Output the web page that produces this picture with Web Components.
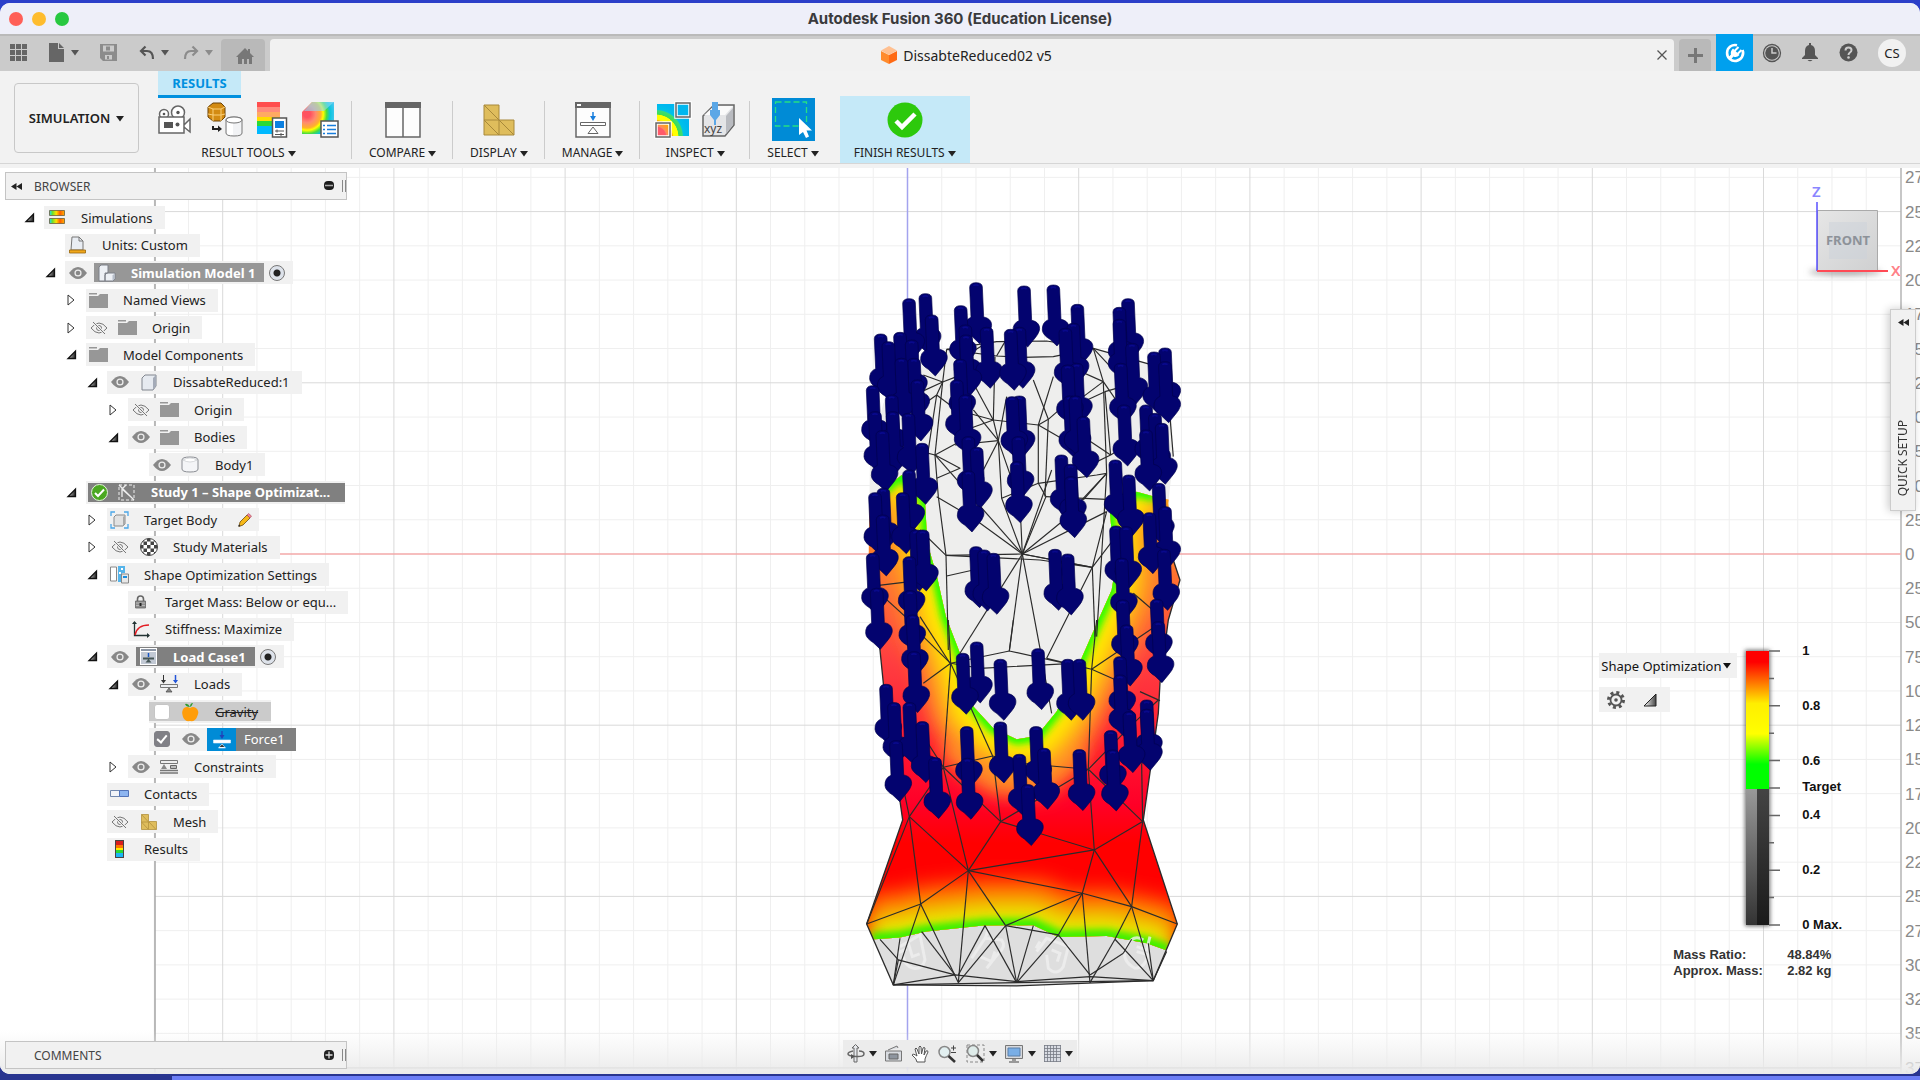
<!DOCTYPE html>
<html lang="en">
<head>
<meta charset="utf-8">
<title>Autodesk Fusion 360 (Education License)</title>
<style>
  html, body { height: 100%; }
  body {
    margin: 0;
    overflow: hidden;
    background: #2c3fc9;
    color: #222;
    font-family: "Noto Sans", "Open Sans", sans-serif;
    font-size: 13px;
  }
</style>
</head>
<body>
<fusion-app></fusion-app>

<script>
// icons.js
const ICONS = {
  grid: [18, 17, '<g fill="#666"><path d="M0 0h5v5H0zM6 0h5v5H6zM12 0h5v5h-5zM0 6h5v5H0zM6 6h5v5H6zM12 6h5v5h-5zM0 12h5v5H0zM6 12h5v5H6zM12 12h5v5h-5z"/></g>'],
  file: [16, 19, '<path fill="#666" d="M0 0h9v6h6v13H0zM10 0l5 5h-5z"/>'],
  save: [18, 17, '<path fill="#8c8c8c" fill-rule="evenodd" d="M0 0h17v17H3l-3-3zM3 1.500v6h11v-6zM5 11v4.500h7V11z"/><path fill="#8c8c8c" d="M6 2.500h4v4H6zM7 12h2v3H7z"/>'],
  undo: [16, 15, '<path d="M2 6h6q6 0 6 8M6.500 1.500L2 6l4.500 4.500" fill="none" stroke="#555" stroke-width="2.200"/>'],
  redo: [16, 15, '<path d="M14 6H8q-6 0-6 8M9.500 1.500L14 6l-4.500 4.500" fill="none" stroke="#8c8c8c" stroke-width="2.200"/>'],
  home: [18, 16, '<path fill="#777" d="M9 0l3 3V1h2v4l4 4h-2v7h-3v-5h-2v5H8v-5H6v5H2V9H0z"/>'],
  cube: [18, 18, '<path fill="#ff8b2d" d="M1 5l8 4v9l-8-4z"/><path fill="#ff6a13" d="M9 9l8-4v9l-8 4z"/><path fill="#ffc091" d="M9 0l8 4.500L9 9 1 4.500z"/>'],
  close: [12, 12, '<path d="M1.500 1.500l9 9m0-9l-9 9" stroke="#555" stroke-width="1.300"/>'],
  plus: [15, 15, '<path d="M7.500 0v15M0 7.500h15" stroke="#777" stroke-width="3"/>'],
  plug: [20, 20, '<path d="M12 2.200A8 8 0 1 0 17.500 7" fill="none" stroke="#fff" stroke-width="2.600"/><path fill="#fff" d="M8 5.500l6.500 6.500q-3 3-6 1.500L5.500 17 3 14.500l3-3q-1-3 2-6z"/><path d="M9.500 8l4-4M12.500 11l4-4" stroke="#fff" stroke-width="2"/>'],
  clock: [20, 20, '<circle cx="10" cy="10" r="8.500" fill="none" stroke="#555" stroke-width="1.300"/><circle cx="10" cy="10" r="6.800" fill="#555"/><path d="M10 5v5h4.500" fill="none" stroke="#ccc" stroke-width="1.500"/>'],
  bell: [16, 19, '<path fill="#555" d="M7 0h2v2q4 1 4 6v4l3 3v1H0v-1l3-3V8q0-5 4-6zM5.500 17h5q-2.500 2.500-5 0z"/>'],
  help: [19, 19, '<circle cx="9.500" cy="9.500" r="9" fill="#555"/><path d="M6.500 7.500q0-3 3-3t3 2.500q0 1.500-1.500 2.500T9.500 12" fill="none" stroke="#ccc" stroke-width="2"/><circle cx="9.500" cy="14.500" r="1.300" fill="#ccc"/>'],
  caret: [8, 7, '<path fill="currentColor" d="M0 1h8L4 6.500z"/>'],
  rewind: [11, 7, '<path fill="#222" d="M5.500 0v7L0 3.500zM11 0v7L5.500 3.500z"/>'],
  minus: [10, 10, '<rect width="10" height="9" rx="4" fill="#1c1c1c"/><path d="M1 4.500h8" stroke="#aaa" stroke-width="1.300"/>'],
  plusdot: [10, 10, '<rect width="10" height="10" rx="4" fill="#222"/><path d="M1.500 5h7M5 1.500v7" stroke="#ddd" stroke-width="1.300"/>'],
  camera: [34, 30, '<g fill="#fff" stroke="#666" stroke-width="1.500"><circle cx="6" cy="9" r="4.500"/><circle cx="20" cy="7.500" r="6.500"/><path d="M1 12h25v16H1zM26 20l6-6v13l-6-5z"/></g><g fill="#555"><circle cx="6" cy="9" r="1.300"/><circle cx="20" cy="7.500" r="1.700"/><path d="M6 17h9v6H6z"/><circle cx="19.500" cy="19.500" r="2"/></g>'],
  convert: [37, 35, '<path fill="#d38b12" stroke="#6b4207" d="M2 5l5-4h8l4 4v10l-4 4H7l-5-4z"/><path d="M2 5l5 2h8l4-2M7 7v12M15 7v12M7 13h8M2 12l5 1M19 12l-4 1" stroke="#fbd079" fill="none"/><path d="M7 24v3h6" stroke="#222" stroke-width="2" fill="none"/><path fill="#222" d="M12 23.500l4 3.500-4 3z"/><path fill="#f2f3f5" stroke="#777" d="M20 18v13q0 3 8 3t8-3V18q0-3-8-3t-8 3z"/><path fill="#fff" d="M21 20h6v13q-6 0-6-2z"/><ellipse cx="28" cy="18" rx="8" ry="3" fill="#fff" stroke="#777"/>'],
  legendtool: [31, 37, '<path fill="#ff4e4e" d="M0 1h23v6H0z"/><path fill="#ff8b7c" d="M0 6h23v6H0z"/><path fill="#ffaa63" d="M0 11h23v6H0z"/><path fill="#fd0" d="M0 16h23v5H0z"/><path fill="#2bd935" d="M0 20h23v5H0z"/><path fill="#00b9ff" d="M0 25h23v8H0z"/><path fill="#fff" stroke="#555" stroke-width="1.500" d="M15.500 17h14v19h-14z"/><path fill="#0c80e0" d="M18 20h9v7h-9z"/><path d="M18 30h9m-9 3.500h9M20 28.500v3m4 .500v3" stroke="#555"/>'],
  probe: [37, 37, '<defs><radialGradient id="r" cx="5" cy="13" r="29" gradientUnits="userSpaceOnUse"><stop offset=".12" stop-color="#ff5260"/><stop offset=".3" stop-color="#ff8a70"/><stop offset=".48" stop-color="#ffb12b"/><stop offset=".56" stop-color="#ff0"/><stop offset=".68" stop-color="#49dd3e"/><stop offset=".8" stop-color="#09c5de"/><stop offset="1" stop-color="#52c8f1"/></radialGradient></defs><path fill="url(#r)" d="M10 1h22v32H0V11z"/><path fill="#8fdaf3" opacity=".6" d="M10 1h22L22 10H2z"/><path fill="#fff" stroke="#555" stroke-width="1.500" d="M19 20h17v16H19z"/><path d="M25 24.500h9M25 28.500h9M25 32.500h9" stroke="#177ddc" stroke-width="1.500"/><path d="M21 24.500h2M21 28.500h2M21 32.500h2" stroke="#177ddc" stroke-width="1.500"/>'],
  compare: [36, 36, '<path fill="#fdfdfd" stroke="#666" stroke-width="1.500" d="M1 1h34v34H1z"/><path fill="#666" d="M0 0h36v6H0z"/><path d="M18 6v29" stroke="#666" stroke-width="1.500"/>'],
  mesh: [32, 32, '<path fill="#dfbd5c" stroke="#a8893a" d="M1 1h15v15h15v15H1zM1 16h15v15M1 1l15 15M1 16l15 15M16 16l15 15"/>'],
  manage: [36, 36, '<path fill="#fdfdfd" stroke="#666" stroke-width="1.500" d="M1 1h34v34H1z"/><path fill="#666" d="M0 0h36v6H0z"/><path fill="#fff" d="M2 2h4v2H2z"/><path d="M18 10v6" stroke="#177ddc" stroke-width="1.500"/><path fill="#177ddc" d="M15 14h6l-3 5z"/><path fill="#fff" stroke="#666" d="M5.500 20.500h25v3h-25zM18 25l5 6.500H13z"/>'],
  inspect: [38, 38, '<defs><radialGradient id="r" cx="2" cy="36" r="33" gradientUnits="userSpaceOnUse"><stop offset=".3" stop-color="#ff596a"/><stop offset=".33" stop-color="#ff8b5e"/><stop offset=".5" stop-color="#fa0"/><stop offset=".52" stop-color="#ff0"/><stop offset=".67" stop-color="#ff0"/><stop offset=".69" stop-color="#3ddc55"/><stop offset=".8" stop-color="#3ddc75"/><stop offset=".83" stop-color="#00c3e6"/><stop offset="1" stop-color="#00b7ef"/></radialGradient></defs><path fill="url(#r)" d="M3 3h32v32H3z"/><g fill="none" stroke="#fff" stroke-width="3.500"><path d="M22 2h14v14H22zM2 22h14v14H2z"/></g><g fill="none" stroke="#666" stroke-width="1.500"><path d="M22 2h14v14H22zM2 22h14v14H2z"/></g>'],
  xyz: [34, 36, '<path fill="#e4e5e7" stroke="#666" stroke-width="1.500" d="M1 14L12 3h20v20L23 34H1z"/><path fill="#fff" opacity=".8" d="M2 13L12 4h19l-8 9z"/><path fill="#b9bbc0" d="M24 14l7-8v17l-7 9z"/><path fill="#5ba7e6" d="M10 0h6v8h2v5l-4 5v5h-2v-5l-4-5V8h2z"/><text x="2" y="31" font-size="12" font-family="Noto Sans, sans-serif" fill="#444">xyz</text>'],
  select: [43, 43, '<path fill="#008bd6" d="M0 0h43v43H0z"/><path d="M3.500 4h31v24h-31z" fill="none" stroke="#25e083" stroke-width="1.300" stroke-dasharray="6 3"/><path fill="#fff" d="M27 20v17l4-3 3 6 3-1.500-2.500-6H40z"/>'],
  finish: [36, 36, '<circle cx="18" cy="18" r="17.500" fill="#2dc90c"/><path d="M9 19l6 6 13-13" fill="none" stroke="#fff" stroke-width="4.500"/>'],
  open: [9, 9, '<defs><linearGradient id="o"><stop offset="0" stop-color="#ccc"/><stop offset="1" stop-color="#222"/></linearGradient></defs><path fill="url(#o)" stroke="#111" stroke-width="1.300" d="M8.500 1v7.500H1z"/>'],
  closed: [8, 12, '<path fill="#fff" stroke="#333" d="M1 1v10l6-5z"/>'],
  eye: [18, 12, '<path fill="#888" d="M0 6q9-12 18 0-9 12-18 0z"/><circle cx="9" cy="6" r="3.600" fill="#eee"/><circle cx="9" cy="6" r="2.300" fill="#888"/>'],
  eyeoff: [18, 14, '<path fill="none" stroke="#777" d="M1 7q8-10 16 0-8 10-16 0z"/><circle cx="9" cy="7" r="2.500" fill="none" stroke="#777"/><path d="M3 1l12 12" stroke="#eee" stroke-width="2.500"/><path d="M3 1l12 12" stroke="#777"/>'],
  folder: [19, 15, '<path fill="#979797" d="M0 3h9l2-2h8v14H0zM0 0h8v1.500H0z"/>'],
  sims: [16, 15, '<defs><linearGradient id="s"><stop offset="0" stop-color="#19d7ff"/><stop offset=".2" stop-color="#6be02c"/><stop offset=".45" stop-color="#ffe100"/><stop offset=".7" stop-color="#ff5a00"/><stop offset="1" stop-color="#ffb400"/></linearGradient></defs><path fill="url(#s)" stroke="#6b5d3a" stroke-width=".8" d="M.500.500h15v5H.500zM.500 8.500h15v5H.500z"/>'],
  units: [17, 18, '<path fill="#e9edf3" stroke="#777" d="M3 1h7l4 4v9H2z"/><path d="M10 1v4h4" fill="none" stroke="#777"/><path fill="#f0a71b" stroke="#99660a" stroke-width=".8" d="M.500 14h16v3H.500z"/>'],
  component: [18, 18, '<path fill="#edf0f5" stroke="#7c8089" d="M1 3l2-2h7v8H7v8H1zM7 11l2-2h8v6l-2 2H7z"/><path fill="#b6bdca" d="M14.500 11.500l2-2v5.500l-2 2z"/>'],
  body: [16, 17, '<path fill="#e6eaf0" stroke="#80858e" d="M1 4l3-3h11v11l-3 4H1z"/><path fill="#a4abb8" d="M12 4l3-3v11l-3 4z"/>'],
  solid: [19, 17, '<path fill="#f4f5f7" stroke="#8a8d93" d="M1 4q0-3 8-3t8 3v9q0 3-8 3t-8-3z"/><path fill="#fff" stroke="#c5c8cc" stroke-width=".7" d="M2 4q7-4 14 0-7 4-14 0z"/>'],
  ok: [17, 17, '<circle cx="8.500" cy="8.500" r="8" fill="#4ba821" stroke="#e2f3da"/><path d="M4 9l3 3 6-6.500" fill="none" stroke="#fff" stroke-width="2"/>'],
  study: [17, 17, '<path d="M1 1h15v15H1z" fill="none" stroke="#eee" stroke-dasharray="3 2"/><path d="M1 1l15 15M4 13V5l9 8M4 5l4-4" fill="none" stroke="#eee" stroke-width="1.300"/>'],
  target: [19, 18, '<path d="M1 5V1h4M14 1h4v4M18 13v4h-4M5 17H1v-4" fill="none" stroke="#4ba7e8" stroke-width="1.300"/><path fill="#e2e2e2" stroke="#8a8a8a" d="M4 6l2-2h9v9l-2 2H4z"/><path fill="#aaa" d="M13 6l2-2v9l-2 2z"/>'],
  pencil: [14, 14, '<path fill="#f6b817" stroke="#6d4b10" stroke-width=".8" d="M3 9l7-7 3 3-7 7-4 1.500z"/><path fill="#e89" stroke="#a45" stroke-width=".6" d="M10 2l1.500-1.500 3 2.500L13 5z"/><path fill="#222" d="M1 13.500l1-2 1.500 1.500z"/>'],
  ball: [18, 18, '<defs><pattern id="b" width="7" height="7" patternUnits="userSpaceOnUse"><path fill="#444" d="M0 0h3.500v3.500H0zM3.500 3.500H7V7H3.500z"/></pattern></defs><circle cx="9" cy="9" r="8.500" fill="#fff"/><circle cx="9" cy="9" r="8.500" fill="url(#b)" stroke="#444"/>'],
  settings: [19, 18, '<path fill="#fff" stroke="#888" d="M.500 1h6v14h-6z"/><path fill="#55b4ea" d="M8 0h7v7h-3v9H8z"/><path fill="#fff" d="M9 6h2v2H9zM11 2h2v2h-2z"/><path fill="#e8e8e8" stroke="#888" d="M11.500 8h7v9h-7z"/><path fill="#1b8ee0" d="M13 10h4v2h-4z"/>'],
  lock: [11, 14, '<path d="M2.500 6V4q0-3 3-3t3 3v2" fill="none" stroke="#666" stroke-width="1.600"/><path fill="#8d8d8d" stroke="#666" stroke-width=".8" d="M.500 6h10v7H.500z"/><path d="M1 8h9M1 10.500h9" stroke="#ccc" stroke-width=".7"/><path fill="#222" d="M4.500 8h2v3h-2z"/>'],
  curve: [18, 17, '<path d="M2.500 1v13.500H17" fill="none" stroke="#233" stroke-width="1.300"/><path d="M3 14q2-10 14-10" fill="none" stroke="#e31c23" stroke-width="1.400"/><path fill="#233" d="M0 3l2.500-3L5 3zM15 12l3 2.500-3 2.500z"/>'],
  loadcase: [17, 17, '<path fill="#fff" d="M0 0h17v17H0z"/><path fill="#c2c9d4" d="M1 4h15v12H1z"/><path fill="#8b95a5" d="M1 1h15v2H1z"/><path d="M8.500 5v4" stroke="#1756c4" stroke-width="1.500"/><path fill="#455" d="M3 9.500h11v2H3zM8.500 11l3 3.500h-6z"/>'],
  loads: [19, 18, '<path d="M3.500 0v7M15.500 0v7" stroke="#333"/><path fill="#333" d="M1 5h5L3.500 8.500z"/><path d="M15.500 0v7" stroke="#2456d8" stroke-width="1.500"/><path fill="#2456d8" d="M13 5h5l-2.500 3.500z"/><path fill="#eef0f3" stroke="#777" d="M.500 9.500h17v3H.500z"/><path fill="#888" stroke="#444" stroke-width=".7" d="M9 13l3 4H6z"/>'],
  apple: [17, 18, '<path fill="#ff9d0a" d="M8 5q3-2 6 0 4 3 1 9-2 5-7 4-5 1-7-4-2-6 1-9 3-2 6 0z"/><path fill="#2e9a2e" d="M8 4q-2-4-5-3 1 3 5 3zM8 4q0-4 3-4-1 3-3 4z"/>'],
  force: [18, 17, '<path d="M9 0v5" stroke="#2141b8" stroke-width="1.300"/><path fill="#2141b8" d="M6.500 4h5L9 8z"/><path fill="#fff" stroke="#dfefff" stroke-width=".6" d="M.500 9h17v3H.500zM9 13l3.500 4h-7z"/><path fill="#333" d="M9 13.500l2.500 2.500h-5z"/>'],
  constraints: [19, 14, '<path fill="#eee" stroke="#777" d="M.500.500h17v3H.500z"/><path d="M0 10.500h18M0 13h18" stroke="#777" stroke-width="1.500"/><path fill="#888" d="M4 4l3 5H1z"/><path fill="#bbb" stroke="#666" d="M10.500 5.500h6v3h-6z"/>'],
  contacts: [19, 8, '<path fill="#f2f4f8" stroke="#7288ad" d="M.500.500h9v6h-9z"/><path fill="#8db5f0" stroke="#5273b8" d="M9.500.500h9v6h-9z"/>'],
  meshsmall: [16, 16, '<path fill="#dfbd5c" stroke="#b3923e" stroke-width=".8" d="M.500.500h7v7h8v8H.500zM.500 8h7v7M.500.500l7 7.500M.500 8l7 7.500M8 8l7 7.500"/>'],
  results: [9, 18, '<path fill="#d81e1e" d="M0 0h9v18H0z"/><path fill="#f70" d="M1 5h7v3H1z"/><path fill="#fe0" d="M1 8h7v2H1z"/><path fill="#2bd935" d="M1 10h7v3H1z"/><path fill="#1ab6f5" d="M1 13h7v4H1z"/><path fill="none" stroke="#444" d="M.500.500h8v17h-8z"/>'],
  gear: [18, 18, '<circle cx="9" cy="9" r="7.500" fill="none" stroke="#555" stroke-width="3" stroke-dasharray="3 2.900"/><circle cx="9" cy="9" r="5.500" fill="#f1f1f1" stroke="#555" stroke-width="1.800"/><circle cx="9" cy="9" r="1.800" fill="#555"/>'],
  ramp: [14, 14, '<defs><linearGradient id="o"><stop offset="0" stop-color="#fff"/><stop offset="1" stop-color="#444"/></linearGradient></defs><path fill="url(#o)" stroke="#222" d="M13 1v12H1z"/>'],
  orbit: [18, 19, '<path fill="#e6e8ec" stroke="#666" d="M7 4h-2L8.500.500 12 4h-2v14H7z"/><path d="M6 7q-5 1-5 3t8 2.500T17 10t-5-3" fill="none" stroke="#666" stroke-width="1.500"/><path fill="#555" d="M4 10l4 2.500L4 15z"/>'],
  look: [18, 17, '<path fill="#d8dbe0" stroke="#777" d="M.500 6h16v10H.500zM3 5l9-4 1 2"/><path fill="#8e959f" stroke="#666" d="M4 9h9v5H4z"/>'],
  hand: [19, 18, '<path fill="#fff" stroke="#555" d="M6 17q0-3-5-7 1-2 5 1L4 4q1-2 2 0l2 5V2q1-2 2 0l.500 7L12 3q1-1 2 0l-1 7 2-4q2-1 2 1-2 4-3 7v3z"/>'],
  zoom: [19, 18, '<circle cx="6.500" cy="7" r="5.500" fill="#e2eff0" stroke="#888" stroke-width="1.500"/><path d="M10.500 11l6.500 6" stroke="#333" stroke-width="2.500"/><path d="M13 3h5m-2.500-2.500v5M13 7.500h5" stroke="#444"/>'],
  zoomwin: [19, 19, '<path d="M1 1h17v17H1z" fill="none" stroke="#888" stroke-dasharray="3 2"/><circle cx="7" cy="7" r="5.500" fill="#dfecea" stroke="#888" stroke-width="1.500"/><path d="M11 11l6 6" stroke="#333" stroke-width="2.500"/>'],
  display: [19, 18, '<path fill="#d6d8dc" stroke="#777" d="M.500.500h17v13H.500z"/><path fill="#79aee6" stroke="#5b7fa8" d="M3 3h12v8H3z"/><path fill="#999" d="M7 14h4v2h3v2H4v-2h3z"/>'],
  gridview: [17, 17, '<path fill="#d9dce3" d="M0 0h17v17H0z"/><path d="M.500 0v17M3.500 0v17M6.500 0v17M9.500 0v17M12.500 0v17M16.500 0v17M0 .500h17M0 3.500h17M0 6.500h17M0 9.500h17M0 12.500h17M0 16.500h17" stroke="#777b85" stroke-width=".8"/>'],
};

class FusionIcon extends HTMLElement {
  constructor() {
    super();
    this.attachShadow({ mode: 'open' });
  }

  connectedCallback() {
    const [w, h, body] = ICONS[this.getAttribute('name')];
    this.shadowRoot.innerHTML = `
      <style>
        :host { display: inline-flex; flex: none; }
        svg { display: block; overflow: visible; }
      </style>
      <svg width="${w}" height="${h}" viewBox="0 0 ${w} ${h}" aria-hidden="true">${body}</svg>
    `;
  }
}
customElements.define('fusion-icon', FusionIcon);

const icon = (name) => `<fusion-icon name="${name}"></fusion-icon>`;

const BUTTON_RESET = `
  button {
    display: inline-flex;
    align-items: center;
    justify-content: center;
    margin: 0;
    padding: 0;
    border: 0;
    background: none;
    font: inherit;
    color: inherit;
  }
`;

// title-bar.js
class TitleBar extends HTMLElement {
  constructor() {
    super();
    this.attachShadow({ mode: 'open' });
    this.shadowRoot.innerHTML = `
      <style>
        ${BUTTON_RESET}
        :host {
          display: grid;
          grid-template-columns: 1fr auto 1fr;
          align-items: center;
          height: 31px;
          background: #eeeff9;
        }
        .lights { display: flex; gap: 9px; padding-left: 9px; }
        .lights button { width: 14px; height: 14px; border-radius: 50%; }
        .red { background: #ff5f57; }
        .yellow { background: #febc2e; }
        .green { background: #28c840; }
        h1 { margin: 0; font: 700 15px Inter, sans-serif; color: #3a3a3c; }
      </style>
      <div class="lights">
        <button class="red" aria-label="Close"></button>
        <button class="yellow" aria-label="Minimize"></button>
        <button class="green" aria-label="Zoom"></button>
      </div>
      <h1><slot></slot></h1>
    `;
  }
}
customElements.define('title-bar', TitleBar);

// document-bar.js
class DocumentBar extends HTMLElement {
  constructor() {
    super();
    this.attachShadow({ mode: 'open' });
    this.shadowRoot.innerHTML = `
      <style>
        ${BUTTON_RESET}
        :host {
          display: flex;
          align-items: stretch;
          height: 37px;
          padding-right: 2px;
          box-sizing: border-box;
          background: #cbcbcb;
          box-shadow: inset 0 2px #bababa;
        }
        .quick { display: flex; align-items: center; width: 221px; color: #555; }
        .quick button { height: 30px; gap: 6px; }
        .apps { margin-left: 10px; }
        .file, .save, .undo { margin-left: 21px; }
        .redo { margin-left: 14px; }
        .dim { color: #8c8c8c; }
        .home, .add { margin-top: 5px; background: #b9b9b9; border-radius: 4px 4px 0 0; }
        .home { width: 44px; padding: 2px 0 0 4px; }
        .tab {
          display: flex;
          flex: 1;
          align-items: center;
          margin: 5px 5px 0;
          padding-left: 12px;
          background: #f1f1f1;
          border-radius: 4px 4px 0 0;
        }
        .name { display: flex; flex: 1; align-items: center; justify-content: center; gap: 5px; font-size: 14px; }
        .close { width: 24px; }
        .add { width: 32px; }
        .ext { width: 37px; margin-left: 5px; background: #00a0ee; }
        .tool { width: 38px; }
        .avatar {
          align-self: center;
          width: 28px;
          height: 28px;
          margin: 0 12px 0 11px;
          border-radius: 50%;
          background: #f1f1f1;
        }
      </style>
      <div class="quick">
        <button class="apps" aria-label="Data panel">${icon('grid')}</button>
        <button class="file" aria-label="File">${icon('file')}${icon('caret')}</button>
        <button class="save dim" aria-label="Save">${icon('save')}</button>
        <button class="undo" aria-label="Undo">${icon('undo')}${icon('caret')}</button>
        <button class="redo dim" aria-label="Redo">${icon('redo')}${icon('caret')}</button>
      </div>
      <button class="home" aria-label="Home">${icon('home')}</button>
      <div class="tab">
        <div class="name">${icon('cube')}<slot></slot></div>
        <button class="close" aria-label="Close document">${icon('close')}</button>
      </div>
      <button class="add" aria-label="New document">${icon('plus')}</button>
      <button class="ext" aria-label="Extensions">${icon('plug')}</button>
      <button class="tool" aria-label="Job status">${icon('clock')}</button>
      <button class="tool" aria-label="Notifications">${icon('bell')}</button>
      <button class="tool" aria-label="Help">${icon('help')}</button>
      <button class="avatar">CS</button>
    `;
  }
}
customElements.define('document-bar', DocumentBar);

// tool-group.js
class ToolGroup extends HTMLElement {
  constructor() {
    super();
    this.attachShadow({ mode: 'open' });
  }

  connectedCallback() {
    const names = this.getAttribute('icons').split(' ');
    const label = this.getAttribute('label');
    this.shadowRoot.innerHTML = `
      <style>
        ${BUTTON_RESET}
        :host {
          display: flex;
          flex-direction: column;
          align-items: center;
          box-sizing: border-box;
          height: 67px;
          padding: 0 17px;
        }
        :host(:not([last])) { background: linear-gradient(#ccc, #ccc) right 5px / 1px 58px no-repeat; }
        :host([wide]) { padding: 0 13px 0 0; }
        :host([tight]) { padding: 0 14px; }
        :host([highlight]) { padding: 0 14px; background: #c5e9f8; }
        .icons { display: flex; align-items: center; gap: 14px; height: 47px; }
        :host([tight]) .icons { gap: 10px; }
        .label { gap: 3px; height: 20px; font-size: 12px; line-height: 20px; white-space: nowrap; }
      </style>
      <div class="icons">
        ${names.map((n) => `<button aria-label="${n}">${icon(n)}</button>`).join('')}
      </div>
      <button class="label">${label}${icon('caret')}</button>
    `;
  }
}
customElements.define('tool-group', ToolGroup);

// tool-ribbon.js
class ToolRibbon extends HTMLElement {
  constructor() {
    super();
    this.attachShadow({ mode: 'open' });
    this.shadowRoot.innerHTML = `
      <style>
        ${BUTTON_RESET}
        :host {
          display: flex;
          height: 97px;
          box-sizing: border-box;
          padding-left: 14px;
          background: linear-gradient(#d6d6d6, #d6d6d6) 0 92px / 100% 1px no-repeat #f2f2f2;
        }
        .workspace {
          width: 125px;
          height: 70px;
          margin-top: 12px;
          gap: 6px;
          border: 1px solid #c8c8c8;
          border-radius: 4px;
          font-weight: 600;
          box-sizing: border-box;
        }
        .area { margin-left: 19px; }
        .tab {
          display: flex;
          width: 83px;
          height: 27px;
          box-sizing: border-box;
          border-bottom: 3px solid #0090df;
          background: #c5e9f8;
          color: #0090df;
          font-weight: 700;
        }
        .groups { display: flex; margin-top: -2px; }
        .finish { margin-left: 4px; }
      </style>
      <button class="workspace">SIMULATION ${icon('caret')}</button>
      <div class="area">
        <button class="tab">RESULTS</button>
        <div class="groups">
          <tool-group label="RESULT TOOLS" icons="camera convert legendtool probe" wide></tool-group>
          <tool-group label="COMPARE" icons="compare"></tool-group>
          <tool-group label="DISPLAY" icons="mesh"></tool-group>
          <tool-group label="MANAGE" icons="manage"></tool-group>
          <tool-group label="INSPECT" icons="inspect xyz" tight></tool-group>
          <tool-group label="SELECT" icons="select" last></tool-group>
          <tool-group class="finish" label="FINISH RESULTS" icons="finish" last highlight></tool-group>
        </div>
      </div>
    `;
  }
}
customElements.define('tool-ribbon', ToolRibbon);

// panel-header.js
class PanelHeader extends HTMLElement {
  constructor() {
    super();
    this.attachShadow({ mode: 'open' });
  }

  connectedCallback() {
    const open = this.hasAttribute('open');
    this.shadowRoot.innerHTML = `
      <style>
        ${BUTTON_RESET}
        :host {
          display: flex;
          align-items: center;
          width: 342px;
          height: 28px;
          box-sizing: border-box;
          border: 1px solid #c4c4c4;
          background: #f1f1f1;
          color: #444;
          font-size: 12px;
        }
        .fold { width: 11px; margin: 0 12px 0 5px; }
        .title { flex: 1; }
        .grip { width: 2px; height: 12px; margin-left: 8px; border: solid #888; border-width: 0 1px; }
      </style>
      ${open ? `<button class="fold" aria-label="Collapse panel">${icon('rewind')}</button>` : '<span class="fold"></span>'}
      <span class="title"><slot></slot></span>
      <button aria-label="Toggle panel">${icon(open ? 'minus' : 'plusdot')}</button>
      <span class="grip"></span>
    `;
  }
}
customElements.define('panel-header', PanelHeader);

// tree-node.js
class TreeNode extends HTMLElement {
  constructor() {
    super();
    this.attachShadow({ mode: 'open' });
  }

  connectedCallback() {
    const { level, state, icons, label, kind, extra } = this.node;
    const cells = icons.map((n) => {
      if (n === 'off' || n === 'on') {
        return `<span class="cell"><input type="checkbox" aria-label="${label}" ${n === 'on' ? 'checked' : ''}></span>`;
      }
      const tag = n.startsWith('eye') ? 'button' : 'span';
      return `<${tag} class="cell" ${tag === 'button' ? 'aria-label="Visibility"' : ''}>${icon(n)}</${tag}>`;
    });
    // the last icon belongs to the highlighted part of the row
    const own = kind === 'study' || kind === 'gravity' ? cells.splice(0) : cells.splice(-1);
    let after = '';
    if (extra === 'radio') after = `<input type="radio" aria-label="Activate ${label}" checked>`;
    if (extra === 'pencil') after = `<button class="edit" aria-label="Edit">${icon('pencil')}</button>`;

    this.shadowRoot.innerHTML = `
      <style>
        ${BUTTON_RESET}
        :host { display: flex; align-items: center; margin-left: calc(${level} * 21px); }
        .twist { width: 16px; height: 20px; margin-right: 7px; }
        .row { display: flex; align-items: center; gap: 4px; height: 23px; background: #f1f1f1; }
        .main { display: flex; align-items: center; gap: 4px; height: 100%; padding-right: 12px; }
        .cell { display: flex; flex: none; align-items: center; justify-content: center; width: 25px; }
        .text { margin-left: 8px; white-space: nowrap; }
        .edit { margin: 0 8px 0 4px; }
        .active .main, .study .main { height: 19px; background: #979797; color: #fff; font-weight: 700; }
        .case .main { background: #808080; }
        .active .main { padding-right: 9px; }
        .study { padding: 0 0 0 2px; }
        .study .main { background: #808080; padding-right: 15px; }
        .study .cell:first-child { width: 22px; }
        .gravity .main { height: 19px; background: #cbcbcb; text-decoration: line-through; padding-right: 13px; }
        .force .main { gap: 0; background: linear-gradient(90deg, #008bd6 29px, #808080 29px); color: #fff; padding-right: 11px; }
        .force .main .cell { width: 29px; }
        input { appearance: none; box-sizing: border-box; width: 16px; height: 16px; margin: 0; border-radius: 3px; background: #fff; border: 1px solid #c5c5c5; }
        input:checked { background: #808086; border-color: #808086; }
        input:checked::before {
          content: "";
          display: block;
          width: 4px;
          height: 8px;
          margin: 1px 0 0 4px;
          border: solid #fff;
          border-width: 0 2px 2px 0;
          rotate: 40deg;
        }
        input[type=radio], input[type=radio]:checked {
          margin: 0 8px 0 1px;
          border: 1px solid #777;
          border-radius: 50%;
          background: radial-gradient(circle, #222 3px, #dde2ea 4px);
        }
        input[type=radio]::before { display: none !important; }
      </style>
      ${state ? `<button class="twist" aria-label="${state === 'open' ? 'Collapse' : 'Expand'}">${icon(state)}</button>` : '<span class="twist"></span>'}
      <div class="row ${kind || ''}">
        ${cells.join('')}
        <div class="main">${own.join('')}<span class="text">${label}</span></div>
        ${after}
      </div>
    `;
  }
}
customElements.define('tree-node', TreeNode);

// browser-tree.js
const NODES = [
  [0, 'open', 'sims', 'Simulations'],
  [1, '', 'units', 'Units: Custom'],
  [1, 'open', 'eye component', 'Simulation Model 1', 'active', 'radio'],
  [2, 'closed', 'folder', 'Named Views'],
  [2, 'closed', 'eyeoff folder', 'Origin'],
  [2, 'open', 'folder', 'Model Components'],
  [3, 'open', 'eye body', 'DissabteReduced:1'],
  [4, 'closed', 'eyeoff folder', 'Origin'],
  [4, 'open', 'eye folder', 'Bodies'],
  [5, '', 'eye solid', 'Body1'],
  [2, 'open', 'ok study', 'Study 1 – Shape Optimizat...', 'study'],
  [3, 'closed', 'target', 'Target Body', '', 'pencil'],
  [3, 'closed', 'eyeoff ball', 'Study Materials'],
  [3, 'open', 'settings', 'Shape Optimization Settings'],
  [4, '', 'lock', 'Target Mass: Below or equ...'],
  [4, '', 'curve', 'Stiffness: Maximize'],
  [3, 'open', 'eye loadcase', 'Load Case1', 'active case', 'radio'],
  [4, 'open', 'eye loads', 'Loads'],
  [5, '', 'off apple', 'Gravity', 'gravity'],
  [5, '', 'on eye force', 'Force1', 'force'],
  [4, 'closed', 'eye constraints', 'Constraints'],
  [3, '', 'contacts', 'Contacts'],
  [3, '', 'eyeoff meshsmall', 'Mesh'],
  [3, '', 'results', 'Results'],
];

class BrowserTree extends HTMLElement {
  constructor() {
    super();
    this.attachShadow({ mode: 'open' });
    this.shadowRoot.innerHTML = `
      <style>
        :host {
          display: grid;
          grid-auto-rows: 1fr;
          justify-items: start;
          min-height: 61vh;
          padding: 4px 0 0 16px;
        }
      </style>
    `;
    NODES.forEach(([level, state, icons, label, kind, extra]) => {
      const el = document.createElement('tree-node');
      el.node = { level, state, icons: icons.split(' '), label, kind, extra };
      this.shadowRoot.appendChild(el);
    });
  }
}
customElements.define('browser-tree', BrowserTree);

// model-scene.js
// Mesh polylines, in thirds of a pixel from the scene's corner
const MESH = [
  '547,852 318,856 240,780', '547,852 400,745 290,680', '547,852 285,555', '547,852 485,685 475,512', '547,852 618,680 595,640',
  '547,852 800,725', '547,852 757,892 600,870 318,856', '547,852 660,760 800,610', '547,852 635,600', '547,852 540,700 475,512',
  '547,852 360,1150', '547,852 508,1143', '547,852 600,1135 635,1330', '547,852 757,892 620,1165',
  '320,238 470,215 620,213 760,235 920,280 990,300', '320,238 470,258 547,262 640,260 760,235', '470,258 495,215', '380,255 430,225',
  '308,336 320,238', '308,336 250,315', '308,336 245,365', '308,336 290,375 240,410', '308,336 285,555', '308,336 350,320',
  '290,375 350,420 460,450', '290,375 262,560', '285,555 350,520', '285,555 360,595 290,625', '285,555 245,545', '285,555 295,680 318,856',
  '460,450 400,340', '460,450 465,260', '460,450 350,490', '460,450 595,465', '475,512 400,420', '475,512 500,380', '475,512 460,450',
  '475,512 345,525', '475,512 430,600', '595,465 640,320', '595,465 625,448 580,330', '625,448 680,400', '625,448 615,680', '595,465 595,640',
  '595,465 690,520', '595,640 770,615 800,610', '595,640 485,685', '618,680 800,688', '790,335 760,235', '790,335 690,290', '790,335 690,410',
  '790,335 835,400', '795,365 900,335', '795,365 720,400', '795,365 812,555', '790,335 800,610', '812,555 730,500', '812,555 740,590',
  '812,555 870,520', '800,610 730,690', '800,610 770,1100', '800,725 757,892 850,770', '318,856 325,1140', '240,1040 330,1180', '757,892 765,1100',
  '760,235 830,310 920,340', '990,440 1000,560', '320,918 400,900', '880,970 950,1030', '85,950 210,935', '130,980 240,1080',
  '332,1180 325,1050', '332,1180 240,1090', '332,1180 250,1240', '332,1180 310,1492', '332,1180 458,1458', '332,1180 508,1143 755,1198 620,1165',
  '332,1180 420,1195 700,1180', '508,1143 520,1050', '755,1198 770,1050', '755,1198 745,1498', '755,1198 850,1240', '755,1198 960,1060', '900,1265 960,1292',
  '458,1458 310,1492', '458,1458 482,1655', '458,1458 540,1480 745,1498', '310,1492 208,1640', '310,1492 385,1802', '310,1492 482,1655',
  '310,1492 200,1320', '745,1498 482,1655', '745,1498 763,1740', '745,1498 908,1655', '745,1498 870,1370 955,1290',
  '482,1655 385,1802', '482,1655 763,1740', '208,1640 385,1802', '208,1640 242,1902', '208,1640 175,1480', '208,1640 80,1962',
  '908,1655 763,1740', '908,1655 875,1910', '905,1480 908,1655', '763,1740 385,1802', '763,1740 727,1870', '763,1740 875,1910',
  '385,1802 727,1870', '385,1802 242,1902', '385,1802 497,1967', '385,1802 355,2138', '727,1870 497,1967', '727,1870 875,1910 1012,1962',
  '727,1870 750,2138', '727,1870 655,1995', '242,1902 80,1962', '242,1902 355,2138', '242,1902 160,2145', '875,1910 940,2132', '875,1910 825,2008',
  '497,1967 355,2138', '497,1967 530,2138', '497,1967 655,1995 750,2115', '435,1967 355,2115', '435,1967 530,2138', '655,1995 530,2138',
  '580,1967 530,2138', '825,2008 750,2138', '825,2008 940,2132', '120,2008 175,2070 345,2115', '180,2005 160,2145 345,2115 530,2135 750,2120 940,2132',
  '245,1985 345,2115', '175,2070 160,2145', '850,2050 750,2115', '875,2008 850,2050', '925,2020 940,2132 980,2045', '160,2145 530,2138 940,2132',
];

// Tail of every load arrow, top of the part first
const LOADS = [
  [408, 38], [640, 45], [552, 48], [256, 71], [207, 86], [864, 86], [712, 103], [362, 107], [838, 112], [275, 135], [838, 148],
  [700, 160], [376, 165], [440, 172], [538, 172], [676, 175], [512, 178], [180, 187], [122, 192], [378, 195], [215, 210],
  [145, 215], [876, 220], [975, 234], [942, 246], [222, 265], [184, 265], [360, 268], [975, 275], [710, 280], [842, 280],
  [683, 285], [350, 330], [232, 330], [98, 347], [376, 375], [155, 375], [690, 378], [706, 378], [538, 378], [516, 380],
  [852, 405], [918, 405], [105, 425], [158, 425], [205, 430], [945, 430], [730, 440], [965, 460], [918, 480], [127, 482],
  [385, 500], [535, 500], [246, 520], [410, 532], [664, 555], [826, 570], [530, 575], [692, 583], [207, 600], [385, 603],
  [866, 615], [693, 620], [956, 640], [130, 655], [105, 668], [188, 668], [975, 710], [928, 728], [128, 735], [828, 768],
  [858, 770], [228, 780], [248, 780], [408, 830], [432, 840], [645, 838], [972, 838], [98, 850], [460, 850], [683, 852],
  [208, 860], [845, 865], [110, 955], [210, 962], [950, 988], [848, 990], [218, 1035], [955, 1055], [860, 1065], [410, 1116],
  [594, 1136], [222, 1145], [368, 1150], [840, 1160], [481, 1168], [683, 1168], [718, 1168], [840, 1215], [138, 1243],
  [920, 1290], [162, 1298], [208, 1298], [920, 1318], [868, 1325], [247, 1355], [481, 1356], [380, 1370], [588, 1370],
  [812, 1382], [168, 1412], [612, 1435], [718, 1439], [818, 1440], [538, 1453], [285, 1463], [382, 1465], [563, 1544],
];

const OUTLINE = 'M85 950L90 560 130 400 200 300 320 238 470 215 620 213 760 235 920 280 990 300 1000 560 985 700 1000 870 1020 930 985 1050 960 1240 955 1330 910 1650 1012 1962 940 2132 530 2148 160 2145 80 1962 188 1650 130 1240 120 1140Z';
const INNER = 'M130 660L185 615 255 690 262 820 290 915 318 1040 360 1150 400 1310 460 1375 530 1408 590 1398 650 1325 720 1175 775 1050 815 960 825 900 810 730 845 690 890 665 945 680';
const LOWER = 'M95 2009L180 2003 260 1985 430 1967 580 1966 655 2001 800 1998 920 2020 985 2043';
const HOT = 'M60 700' + INNER.replace('M', 'L') + 'L1040 700 1060 1962 985 2043 920 2020 800 1998 655 2001 580 1966 430 1967 260 1985 180 2003 95 2009 40 1962Z';

class ModelScene extends HTMLElement {
  constructor() {
    super();
    this.attachShadow({ mode: 'open' });
    this.shadowRoot.innerHTML = `
      <style>
        :host { display: block; }
        svg { display: block; width: 100%; height: 100%; }
      </style>
      <svg viewBox="0 168 1920 906" preserveAspectRatio="xMidYMid slice" role="img" aria-label="Shape optimization result">
        <defs>
          <clipPath id="body"><path d="${OUTLINE}"/></clipPath>
          <clipPath id="hot"><path d="${HOT}"/></clipPath>
          <filter id="wide" filterUnits="userSpaceOnUse" x="-200" y="300" width="1500" height="2100"><feGaussianBlur stdDeviation="30"/></filter>
          <filter id="soft" filterUnits="userSpaceOnUse" x="-200" y="300" width="1500" height="2100"><feGaussianBlur stdDeviation="11"/></filter>
          <linearGradient id="base" x1="0" y1="700" x2="0" y2="1900" gradientUnits="userSpaceOnUse">
            <stop offset="0" stop-color="#ff9a20"/>
            <stop offset=".25" stop-color="#ff6038"/>
            <stop offset=".4" stop-color="#ff3d40"/>
            <stop offset=".75" stop-color="#ff0028"/>
            <stop offset=".85" stop-color="#f00"/>
          </linearGradient>
          <linearGradient id="fade" x1="0" y1="0" x2="0" y2="1">
            <stop offset="0" stop-color="#eee" stop-opacity="0"/>
            <stop offset="1" stop-color="#eaeaea"/>
          </linearGradient>
          <g id="load">
            <path fill="#03036f" stroke="#01014c" stroke-width="2" d="M-19 14Q-18 0 0 0T19 12L23 103C40 106 50 118 46 134Q42 146 34 155L11 183-10 163Q-32 150-33 135-34 112-15 104Z"/>
            <path fill="none" stroke="#0d0da0" stroke-width="5" opacity=".6" d="M-8 9Q0 4 8 9"/>
          </g>
        </defs>
        <rect y="168" width="1920" height="906" fill="#fff"/>
        ${this.grid()}
        <rect y="1030" width="1920" height="44" fill="url(#fade)"/>
        <g transform="translate(840 270) scale(.3333)">
          <path d="${OUTLINE}" fill="#eeeeed"/>
          <g clip-path="url(#body)">
            <path d="M60 1900H1040V2160H60Z" fill="#dedede"/>
            <g clip-path="url(#hot)" fill="none" stroke-linejoin="round">
              <path d="M0 500H1100V2100H0Z" fill="url(#base)"/>
              <path d="${INNER}" stroke="#ff8a28" stroke-width="270" filter="url(#wide)"/>
              <path d="M340 1400L480 1510H600L700 1400" stroke="#ff8a28" stroke-width="130" filter="url(#wide)"/>
              <path d="${INNER}" stroke="#ffea00" stroke-width="150" filter="url(#wide)"/>
              <path d="${INNER}" stroke="#2f0" stroke-width="32" filter="url(#soft)"/>
              <path d="${LOWER}" stroke="#ff7a00" stroke-width="270" filter="url(#wide)"/>
              <path d="${LOWER}" stroke="#e8e800" stroke-width="140" filter="url(#wide)"/>
              <path d="${LOWER}" stroke="#3cf000" stroke-width="42" filter="url(#soft)"/>
            </g>
            <g fill="none" stroke="#efefef" stroke-width="9" opacity=".8">
              <path d="M180 2030l60-35 15 75q-10 30-35 25t-30-35M205 2020l12 40 22-8M170 2050l30-12"/>
              <path d="M395 2065l40-60 50 5q15 20-10 40l-35 45M420 2060l35 15 10-30M435 2010l10-35"/>
              <path d="M590 2045l30-40 65 25-15 60q-20 30-45 5l-5-40M635 2040l25 10-8 25M600 2015l-12 20"/>
              <path d="M910 2010q-30-20-50 20t25 65q30 0 40-40l-35-10M890 2030l30 10 10-40"/>
            </g>
          </g>
          <g fill="none" stroke="#2b2b2b" stroke-width="3.500" stroke-linejoin="round">
            ${MESH.map((p) => `<polyline points="${p}"/>`).join('')}
            <path d="M85 950L120 1140 130 1240 188 1650 80 1962 160 2145 530 2148 940 2132 1012 1962 910 1650 955 1330 960 1240 985 1050 1020 930 1000 870" stroke-width="4"/>
          </g>
          ${LOADS.map(([x, y]) => `<use href="#load" x="${x}" y="${y}"/>`).join('')}
        </g>
      </svg>
    `;
  }

  grid() {
    const step = 34.24;
    let minor = '';
    let major = '';
    let labels = '';
    for (let i = -22; i < 29; i++) {
      const d = `M${907.5 + i * step} 168V1074`;
      if (i % 5) minor += d; else if (i) major += d;
    }
    for (let j = -11; j <= 15; j++) {
      const y = 554 + j * step;
      const d = `M155 ${y}H1901`;
      if (j % 5) minor += d; else if (j) major += d;
      labels += `<text x="1905" y="${y + 6}">${String(Math.abs(j) * 25).slice(0, 2)}</text>`;
    }
    return `
      <path d="${minor}" stroke="#efefef" stroke-width="1"/>
      <path d="${major}" stroke="#d9d9d9" stroke-width="1"/>
      <path d="M155 168V1074" stroke="#a4a4a4" stroke-width="1.500"/>
      <path d="M1901 168V1074M155 1068H1901" stroke="#b5b5b5" stroke-width="1.500"/>
      <path d="M155 554H1901" stroke="#f3a9a9" stroke-width="1.500"/>
      <path d="M907.500 168V1074" stroke="#a3a3ee" stroke-width="1.500"/>
      <g font-family="Liberation Sans, sans-serif" font-size="17" fill="#8a8a8a">${labels}</g>
    `;
  }
}
customElements.define('model-scene', ModelScene);

// view-cube.js
class ViewCube extends HTMLElement {
  constructor() {
    super();
    this.attachShadow({ mode: 'open' });
    this.shadowRoot.innerHTML = `
      <style>
        :host { display: block; }
        svg { display: block; overflow: visible; }
      </style>
      <svg width="100" height="92" viewBox="0 0 100 92" role="img" aria-label="View cube">
        <defs>
          <filter id="s" x="-20%" y="-200%" width="140%" height="500%"><feGaussianBlur stdDeviation="3"/></filter>
          <linearGradient id="f" x1="0" y1="0" x2="1" y2="1"><stop offset="0" stop-color="#e6e6e6"/><stop offset="1" stop-color="#cfd0d1"/></linearGradient>
        </defs>
        <ellipse cx="45" cy="89" rx="36" ry="3" fill="#999" filter="url(#s)"/>
        <path fill="url(#f)" stroke="#aaa" d="M17.500 27.500h60v60h-60z"/>
        <path fill="#ccd2da" opacity=".5" d="M29 39h38v37H29z"/>
        <path d="M17 19v69" stroke="#5a50ff" stroke-width="1.500"/>
        <path d="M17 88h71" stroke="#ff4a55" stroke-width="2"/>
        <g font-family="Noto Sans, sans-serif">
          <text x="12" y="14" font-size="15" font-weight="600" fill="#8a86ff">Z</text>
          <text x="91" y="93" font-size="15" font-weight="600" fill="#ff8087">X</text>
          <text x="48" y="62" font-size="13" font-weight="700" fill="#8d9299" text-anchor="middle">FRONT</text>
        </g>
      </svg>
    `;
  }
}
customElements.define('view-cube', ViewCube);

// quick-setup.js
class QuickSetup extends HTMLElement {
  constructor() {
    super();
    this.attachShadow({ mode: 'open' });
    this.shadowRoot.innerHTML = `
      <style>
        ${BUTTON_RESET}
        :host {
          display: flex;
          flex-direction: column;
          align-items: center;
          justify-content: space-between;
          box-sizing: border-box;
          width: 26px;
          height: 202px;
          padding: 9px 0 14px;
          background: #f1f1f1;
          border: 1px solid #ccc;
          box-shadow: -2px 0 8px rgba(0, 0, 0, 0.2);
          font-size: 12px;
          color: #333;
        }
        span { writing-mode: vertical-rl; rotate: 180deg; line-height: 16px; }
      </style>
      <button aria-label="Expand quick setup">${icon('rewind')}</button>
      <span><slot></slot></span>
    `;
  }
}
customElements.define('quick-setup', QuickSetup);

// result-legend.js
class ResultLegend extends HTMLElement {
  constructor() {
    super();
    this.attachShadow({ mode: 'open' });
    let ticks = '';
    for (let i = 0; i <= 10; i++) {
      ticks += `M23 ${1 + i * 27.4}h${i % 2 && i !== 5 ? 5 : 11}`;
    }
    this.shadowRoot.innerHTML = `
      <style>
        ${BUTTON_RESET}
        :host { display: block; color: #111; }
        .top { display: flex; align-items: flex-start; }
        .controls { width: 138px; margin: 3px 9px 0 0; }
        .field { display: flex; align-items: center; height: 25px; padding: 0 6px 0 2px; background: #f1f1f1; }
        select {
          flex: 1;
          min-width: 0;
          appearance: none;
          border: 0;
          padding: 0;
          background: none;
          color: inherit;
          font: inherit;
        }
        .buttons { display: flex; width: 71px; height: 25px; margin-top: 9px; background: #f1f1f1; }
        .buttons button { width: 34px; }
        .scale { display: block; overflow: visible; }
        ol {
          position: relative;
          display: flex;
          flex-direction: column;
          justify-content: space-between;
          height: 290px;
          margin: -7px 0 0 21px;
          padding: 0;
          list-style: none;
          font: 700 13px/16px "Liberation Sans", Arial, sans-serif;
        }
        .target { position: absolute; top: 136px; }
        dl {
          display: grid;
          grid-template-columns: 114px auto;
          margin: 14px 0 0 74px;
          font: 700 13px/16px "Liberation Sans", Arial, sans-serif;
          color: #333;
        }
        dd { margin: 0; }
      </style>
      <div class="top">
        <div class="controls">
          <label class="field">
            <select aria-label="Result type"><option>Shape Optimization</option></select>${icon('caret')}
          </label>
          <div class="buttons">
            <button aria-label="Legend options">${icon('gear')}</button>
            <button aria-label="Legend size">${icon('ramp')}</button>
          </div>
        </div>
        <svg class="scale" width="35" height="276" viewBox="0 0 35 276" aria-hidden="true">
          <defs>
            <filter id="sh" x="-50%" y="-10%" width="200%" height="120%"><feGaussianBlur stdDeviation="2"/></filter>
            <linearGradient id="c" x1="0" y1="0" x2="0" y2="1">
              <stop offset=".08" stop-color="#f00"/><stop offset=".38" stop-color="#fe0"/><stop offset=".6" stop-color="#ff0"/><stop offset=".82" stop-color="#0f0"/>
            </linearGradient>
            <linearGradient id="g" x1="0" y1="0" x2="0" y2="1"><stop offset="0" stop-color="#999"/><stop offset="1" stop-color="#333"/></linearGradient>
            <linearGradient id="k" x1="0" y1="0" x2="0" y2="1"><stop offset="0" stop-color="#444"/><stop offset="1" stop-color="#1a1a1a"/></linearGradient>
          </defs>
          <path d="M-1 0h25v276H-1z" fill="#666" filter="url(#sh)"/>
          <path d="M0 1h23v138H0z" fill="url(#c)"/>
          <path d="M0 139h12v136H0z" fill="url(#g)"/>
          <path d="M11 139h12v136H11z" fill="url(#k)"/>
          <path d="${ticks}" stroke="#666" stroke-width="1.500"/>
        </svg>
        <ol>
          <li>1</li><li>0.8</li><li>0.6</li><li class="target">Target</li><li>0.4</li><li>0.2</li><li>0 Max.</li>
        </ol>
      </div>
      <dl>
        <dt>Mass Ratio:</dt><dd>48.84%</dd>
        <dt>Approx. Mass:</dt><dd>2.82 kg</dd>
      </dl>
    `;
  }
}
customElements.define('result-legend', ResultLegend);

// nav-bar.js
class NavBar extends HTMLElement {
  constructor() {
    super();
    this.attachShadow({ mode: 'open' });
    this.shadowRoot.innerHTML = `
      <style>
        ${BUTTON_RESET}
        :host {
          display: flex;
          align-items: center;
          justify-content: space-between;
          box-sizing: border-box;
          width: 234px;
          height: 27px;
          padding: 0 4px;
          background: #ececec;
        }
        button { gap: 4px; }
      </style>
      <button aria-label="Orbit">${icon('orbit')}${icon('caret')}</button>
      <button aria-label="Look at">${icon('look')}</button>
      <button aria-label="Pan">${icon('hand')}</button>
      <button aria-label="Zoom">${icon('zoom')}</button>
      <button aria-label="Fit">${icon('zoomwin')}${icon('caret')}</button>
      <button aria-label="Display settings">${icon('display')}${icon('caret')}</button>
      <button aria-label="Grid and snaps">${icon('gridview')}${icon('caret')}</button>
    `;
  }
}
customElements.define('nav-bar', NavBar);

// fusion-app.js
class FusionApp extends HTMLElement {
  constructor() {
    super();
    this.attachShadow({ mode: 'open' });
    this.shadowRoot.innerHTML = `
      <style>
        :host {
          display: flex;
          flex-direction: column;
          height: 100vh;
          box-sizing: border-box;
          padding: 3px 0 6px;
          background:
            radial-gradient(circle at 100% 100%, #6b7df5 0 0) 172px 100% / 100% 4px no-repeat,
            linear-gradient(#2c3fc9 50%, #28348f 50%);
        }
        .window {
          display: flex;
          flex: 1;
          flex-direction: column;
          min-height: 0;
          overflow: hidden;
          border-radius: 10px;
          background: #fff;
        }
        .stage { position: relative; display: flex; flex: 1; min-height: 0; }
        model-scene { position: absolute; inset: 0; }
        .left {
          position: relative;
          display: flex;
          flex-direction: column;
          padding: 4px 5px 5px;
        }
        browser-tree { margin-bottom: auto; }
        view-cube { position: absolute; top: 15px; right: 20px; }
        quick-setup { position: absolute; top: 141px; right: 4px; }
        result-legend { position: absolute; right: 78px; bottom: 95px; }
        nav-bar { position: absolute; bottom: 7px; left: 50%; translate: -50%; }
      </style>
      <div class="window">
        <title-bar>Autodesk Fusion 360 (Education License)</title-bar>
        <document-bar>DissabteReduced02 v5</document-bar>
        <tool-ribbon></tool-ribbon>
        <main class="stage">
          <model-scene></model-scene>
          <div class="left">
            <panel-header open>BROWSER</panel-header>
            <browser-tree></browser-tree>
            <panel-header>COMMENTS</panel-header>
          </div>
          <view-cube></view-cube>
          <quick-setup>QUICK SETUP</quick-setup>
          <result-legend></result-legend>
          <nav-bar></nav-bar>
        </main>
      </div>
    `;
  }
}
customElements.define('fusion-app', FusionApp);
</script>
</body>
</html>
